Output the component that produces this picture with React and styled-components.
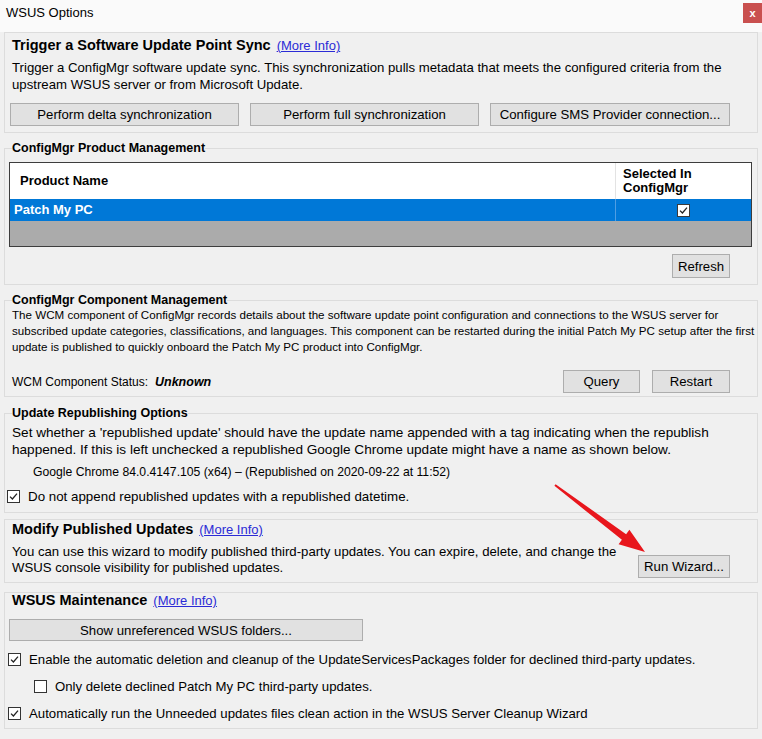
import React from 'react';
import styled, { createGlobalStyle } from 'styled-components';

const Global = createGlobalStyle`
  html, body { margin: 0; padding: 0; background: #f0f0f0; }
  body { font-family: "Liberation Sans", Arial, sans-serif; }
`;

const Window = styled.div`
  position: relative;
  width: 762px;
  height: 739px;
  overflow: hidden;
  background: #f0f0f0;
  color: #000;
  font-family: "Liberation Sans", Arial, sans-serif;
  font-size: 13px;
  display: flex;
  flex-direction: column;
`;

const TitleBar = styled.div`
  height: 32px;
  flex: none;
  display: flex;
  justify-content: space-between;
  align-items: flex-start;
  background: #fafafa;
`;

const TitleText = styled.div`
  padding: 5px 0 0 6px;
  font-size: 13px;
  line-height: 15px;
`;

const CloseButton = styled.div`
  margin-top: 3px;
  width: 19px;
  height: 20px;
  background: #c9504f;
  color: #fff;
  font-size: 11px;
  font-weight: bold;
  line-height: 20px;
  text-align: center;
`;

const Content = styled.div`
  padding: 0 4px;
  display: flex;
  flex-direction: column;
`;

const Panel = styled.section`
  border: 1px solid #dcdcdc;
  margin-top: ${(p) => p.$mt || 0}px;
  padding: ${(p) => p.$pad};
  display: flex;
  flex-direction: column;
`;

const Fieldset = styled.fieldset`
  margin: ${(p) => p.$mt || 0}px 0 0 0;
  border: 1px solid #dcdcdc;
  padding: ${(p) => p.$pad};
  min-width: 0;
  display: flex;
  flex-direction: column;
`;

const Legend = styled.legend`
  padding: 0;
  margin-left: 2px;
  font-weight: bold;
  font-size: 12.5px;
  line-height: 16px;
`;

const PanelTitle = styled.div`
  display: flex;
  align-items: baseline;
  gap: 6px;
  margin-left: 2px;
  font-weight: bold;
  font-size: 14.5px;
  line-height: ${(p) => p.$lh || 18}px;
`;

const Link = styled.a`
  font-weight: normal;
  font-size: 13px;
  color: #2b2bd6;
  text-decoration: underline;
  cursor: pointer;
`;

const Desc = styled.p`
  margin: ${(p) => p.$mt || 0}px 0 0 ${(p) => (p.$ml == null ? 2 : p.$ml)}px;
  font-size: ${(p) => p.$fs || 13}px;
  line-height: ${(p) => p.$lh || 17}px;
  flex: ${(p) => (p.$grow ? 1 : 'none')};
  white-space: nowrap;
`;

const ButtonRow = styled.div`
  display: flex;
  gap: ${(p) => p.$gap || 11}px;
  margin-top: ${(p) => p.$mt || 0}px;
  justify-content: ${(p) => p.$justify || 'flex-start'};
  padding-right: ${(p) => p.$pr || 0}px;
`;

const Button = styled.button`
  width: ${(p) => p.$w}px;
  height: ${(p) => p.$h || 23}px;
  margin: ${(p) => p.$m || 0};
  flex: none;
  background: #e1e1e1;
  border: 1px solid #adadad;
  border-radius: 0;
  padding: 0;
  font-family: "Liberation Sans", Arial, sans-serif;
  font-size: 13.2px;
  color: #000;
`;

const Table = styled.div`
  margin: 6px 0 0 -1px;
  width: 741px;
  border: 1px solid #3d3d3d;
  display: flex;
  flex-direction: column;
`;

const TableRow = styled.div`
  display: grid;
  grid-template-columns: 605px 1fr;
  height: ${(p) => p.$h}px;
  background: ${(p) => p.$bg};
  color: ${(p) => p.$color || '#000'};
`;

const Cell = styled.div`
  display: flex;
  align-items: center;
  justify-content: ${(p) => (p.$center ? 'center' : 'flex-start')};
  padding-left: ${(p) => p.$pl || 0}px;
  border-left: ${(p) => (p.$divider ? `1px solid ${p.$divider}` : 'none')};
  font-weight: bold;
  font-size: 13px;
  line-height: 14px;
`;

const EmptyArea = styled.div`
  height: 25px;
  background: #ababab;
`;

const CheckBox = styled.span`
  flex: none;
  width: 13px;
  height: 13px;
  box-sizing: border-box;
  background: #fff;
  border: 1px solid ${(p) => p.$border || '#333'};
  display: inline-flex;
  align-items: center;
  justify-content: center;
`;

const CheckRow = styled.label`
  display: flex;
  align-items: center;
  gap: 8px;
  margin: ${(p) => p.$mt || 0}px 0 0 ${(p) => p.$ml || 0}px;
  font-size: ${(p) => p.$fs || 13.2}px;
  line-height: 17px;
  white-space: nowrap;
`;

const StatusRow = styled.div`
  display: flex;
  align-items: center;
  margin-top: ${(p) => p.$mt || 0}px;
  padding-right: 22px;
`;

const StatusLabel = styled.span`
  margin-left: 2px;
  font-size: 12px;
  width: 143px;
  white-space: nowrap;
`;

const StatusValue = styled.span`
  font-size: 12.5px;
  font-weight: bold;
  font-style: italic;
  flex: 1;
`;

const WizardRow = styled.div`
  display: flex;
  align-items: flex-start;
  margin-top: 5px;
  padding-right: 27px;
`;

const ArrowLayer = styled.svg`
  position: absolute;
  inset: 0;
  pointer-events: none;
`;

const Check = ({ color = '#222' }) => (
  <svg width="9" height="9" viewBox="0 0 9 9">
    <path d="M1 4.6 L3.4 7 L8 1.6" fill="none" stroke={color} strokeWidth="1.3" />
  </svg>
);

const Checkbox = ({ checked }) => <CheckBox>{checked && <Check />}</CheckBox>;

export default function App() {
  return (
    <>
      <Global />
      <Window>
        <TitleBar>
          <TitleText>WSUS Options</TitleText>
          <CloseButton>x</CloseButton>
        </TitleBar>
        <Content>
          <Panel $pad="3px 0 6px 5px">
            <PanelTitle>
              Trigger a Software Update Point Sync <Link>(More Info)</Link>
            </PanelTitle>
            <Desc $mt={4} $fs={13.2}>
              Trigger a ConfigMgr software update sync. This synchronization pulls metadata that meets the configured criteria from the
              <br />
              upstream WSUS server or from Microsoft Update.
            </Desc>
            <ButtonRow $mt={10}>
              <Button $w={229}>Perform delta synchronization</Button>
              <Button $w={229}>Perform full synchronization</Button>
              <Button $w={240}>Configure SMS Provider connection...</Button>
            </ButtonRow>
          </Panel>

          <Fieldset $mt={7} $pad="0 5px 6px 5px">
            <Legend>ConfigMgr Product Management</Legend>
            <Table>
              <TableRow $h={36} $bg="#fff">
                <Cell $pl={10}>Product Name</Cell>
                <Cell $pl={7} $divider="#e3e3e3">
                  Selected In
                  <br />
                  ConfigMgr
                </Cell>
              </TableRow>
              <TableRow $h={22} $bg="#0078d7" $color="#fff">
                <Cell $pl={4}>Patch My PC</Cell>
                <Cell $center $divider="#4f9ee3">
                  <CheckBox $border="#3a3a3a">
                    <Check />
                  </CheckBox>
                </Cell>
              </TableRow>
              <EmptyArea />
            </Table>
            <ButtonRow $mt={7} $justify="flex-end" $pr={22}>
              <Button $w={58} $h={24}>Refresh</Button>
            </ButtonRow>
          </Fieldset>

          <Fieldset $mt={7} $pad="0 5px 3px 5px">
            <Legend>ConfigMgr Component Management</Legend>
            <Desc $fs={11.6} $lh={16} $mt={-1}>
              The WCM component of ConfigMgr records details about the software update point configuration and connections to the WSUS server for
              <br />
              subscribed update categories, classifications, and languages. This component can be restarted during the initial Patch My PC setup after the first
              <br />
              update is published to quickly onboard the Patch My PC product into ConfigMgr.
            </Desc>
            <StatusRow $mt={15}>
              <StatusLabel>WCM Component Status:</StatusLabel>
              <StatusValue>Unknown</StatusValue>
              <ButtonRow $gap={12}>
                <Button $w={77}>Query</Button>
                <Button $w={78}>Restart</Button>
              </ButtonRow>
            </StatusRow>
          </Fieldset>

          <Fieldset $mt={8} $pad="0 5px 7px 5px">
            <Legend>Update Republishing Options</Legend>
            <Desc $mt={3} $fs={13.6}>
              Set whether a 'republished update' should have the update name appended with a tag indicating when the republish
              <br />
              happened. If this is left unchecked a republished Google Chrome update might have a name as shown below.
            </Desc>
            <Desc $fs={12.2} $lh={16} $mt={6} $ml={23}>
              Google Chrome 84.0.4147.105 (x64) – (Republished on 2020-09-22 at 11:52)
            </Desc>
            <CheckRow $mt={8} $ml={-3} $fs={13.35}>
              <Checkbox checked />
              Do not append republished updates with a republished datetime.
            </CheckRow>
          </Fieldset>

          <Panel $mt={6} $pad="0 0 4px 5px">
            <PanelTitle>
              Modify Published Updates <Link>(More Info)</Link>
            </PanelTitle>
            <WizardRow>
              <Desc $fs={13.2} $lh={16} $grow>
                You can use this wizard to modify published third-party updates. You can expire, delete, and change the
                <br />
                WSUS console visibility for published updates.
              </Desc>
              <Button $w={92} $m="11px 0 0 0">Run Wizard...</Button>
            </WizardRow>
          </Panel>

          <Panel $mt={9} $pad="0 0 6px 5px">
            <PanelTitle $lh={15}>
              WSUS Maintenance <Link>(More Info)</Link>
            </PanelTitle>
            <ButtonRow $mt={11}>
              <Button $w={354} $h={22} $m="0 0 0 -1px">Show unreferenced WSUS folders...</Button>
            </ButtonRow>
            <CheckRow $mt={10} $ml={-2}>
              <Checkbox checked />
              Enable the automatic deletion and cleanup of the UpdateServicesPackages folder for declined third-party updates.
            </CheckRow>
            <CheckRow $mt={10} $ml={24}>
              <Checkbox />
              Only delete declined Patch My PC third-party updates.
            </CheckRow>
            <CheckRow $mt={10} $ml={-2}>
              <Checkbox checked />
              Automatically run the Unneeded updates files clean action in the WSUS Server Cleanup Wizard
            </CheckRow>
          </Panel>
        </Content>

        <ArrowLayer width="762" height="739" viewBox="0 0 762 739">
          <polygon
            points="554.4,485.8 555.6,484.2 626.1,534.2 629.4,529.8 645,552 618.6,544.2 621.9,539.8"
            fill="#e8161c"
          />
        </ArrowLayer>
      </Window>
    </>
  );
}
